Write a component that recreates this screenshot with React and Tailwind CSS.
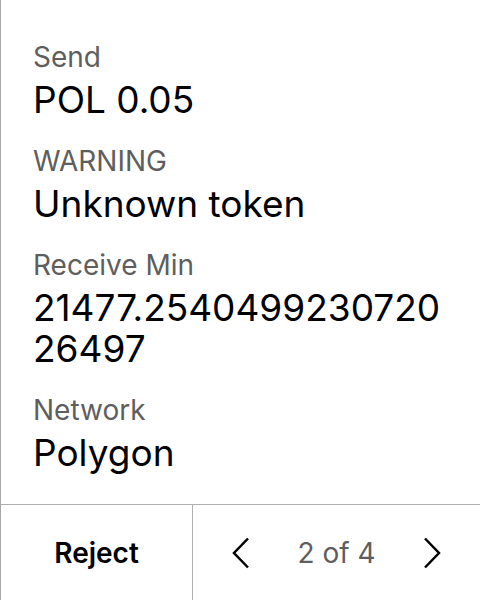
const fields = [
  { label: "Send", value: "POL 0.05" },
  { label: "WARNING", value: "Unknown token" },
  { label: "Receive Min", value: "21477.254049923072026497" },
  { label: "Network", value: "Polygon" },
];

const Chevron = ({ dir }) => (
  <svg width="18" height="32" viewBox="0 0 18 32" fill="none">
    <polyline
      points={dir === "left" ? "16,1.5 2,16 16,30.5" : "2,1.5 16,16 2,30.5"}
      stroke="#000"
      strokeWidth="2.5"
    />
  </svg>
);

const App = () => {
  return (
    <div
      className="w-[480px] h-[600px] bg-white flex flex-col border-l border-[#a8a8a8] text-black"
      style={{ fontFamily: "Inter, 'Noto Sans', sans-serif" }}
    >
      {/* Details */}
      <div className="flex-1 pl-[32px] pr-[32px] pt-[35px] flex flex-col gap-[19px]">
        {fields.map((f) => (
          <div key={f.label} className="flex flex-col">
            <span className="text-[28px] leading-[44px] text-[#5e5e5e]">
              {f.label}
            </span>
            <span className="text-[37px] leading-[41px] break-all">
              {f.value}
            </span>
          </div>
        ))}
      </div>

      {/* Footer */}
      <div className="h-[96px] border-t border-[#b0b0b0] flex">
        <button className="w-[192px] border-r border-[#b0b0b0] flex items-center justify-center text-[28px] font-semibold">
          Reject
        </button>
        <div className="flex-1 flex items-center justify-center gap-[47px]">
          <Chevron dir="left" />
          <span className="text-[28px] text-[#5e5e5e]">2 of 4</span>
          <Chevron dir="right" />
        </div>
      </div>
    </div>
  );
};

export default App;
